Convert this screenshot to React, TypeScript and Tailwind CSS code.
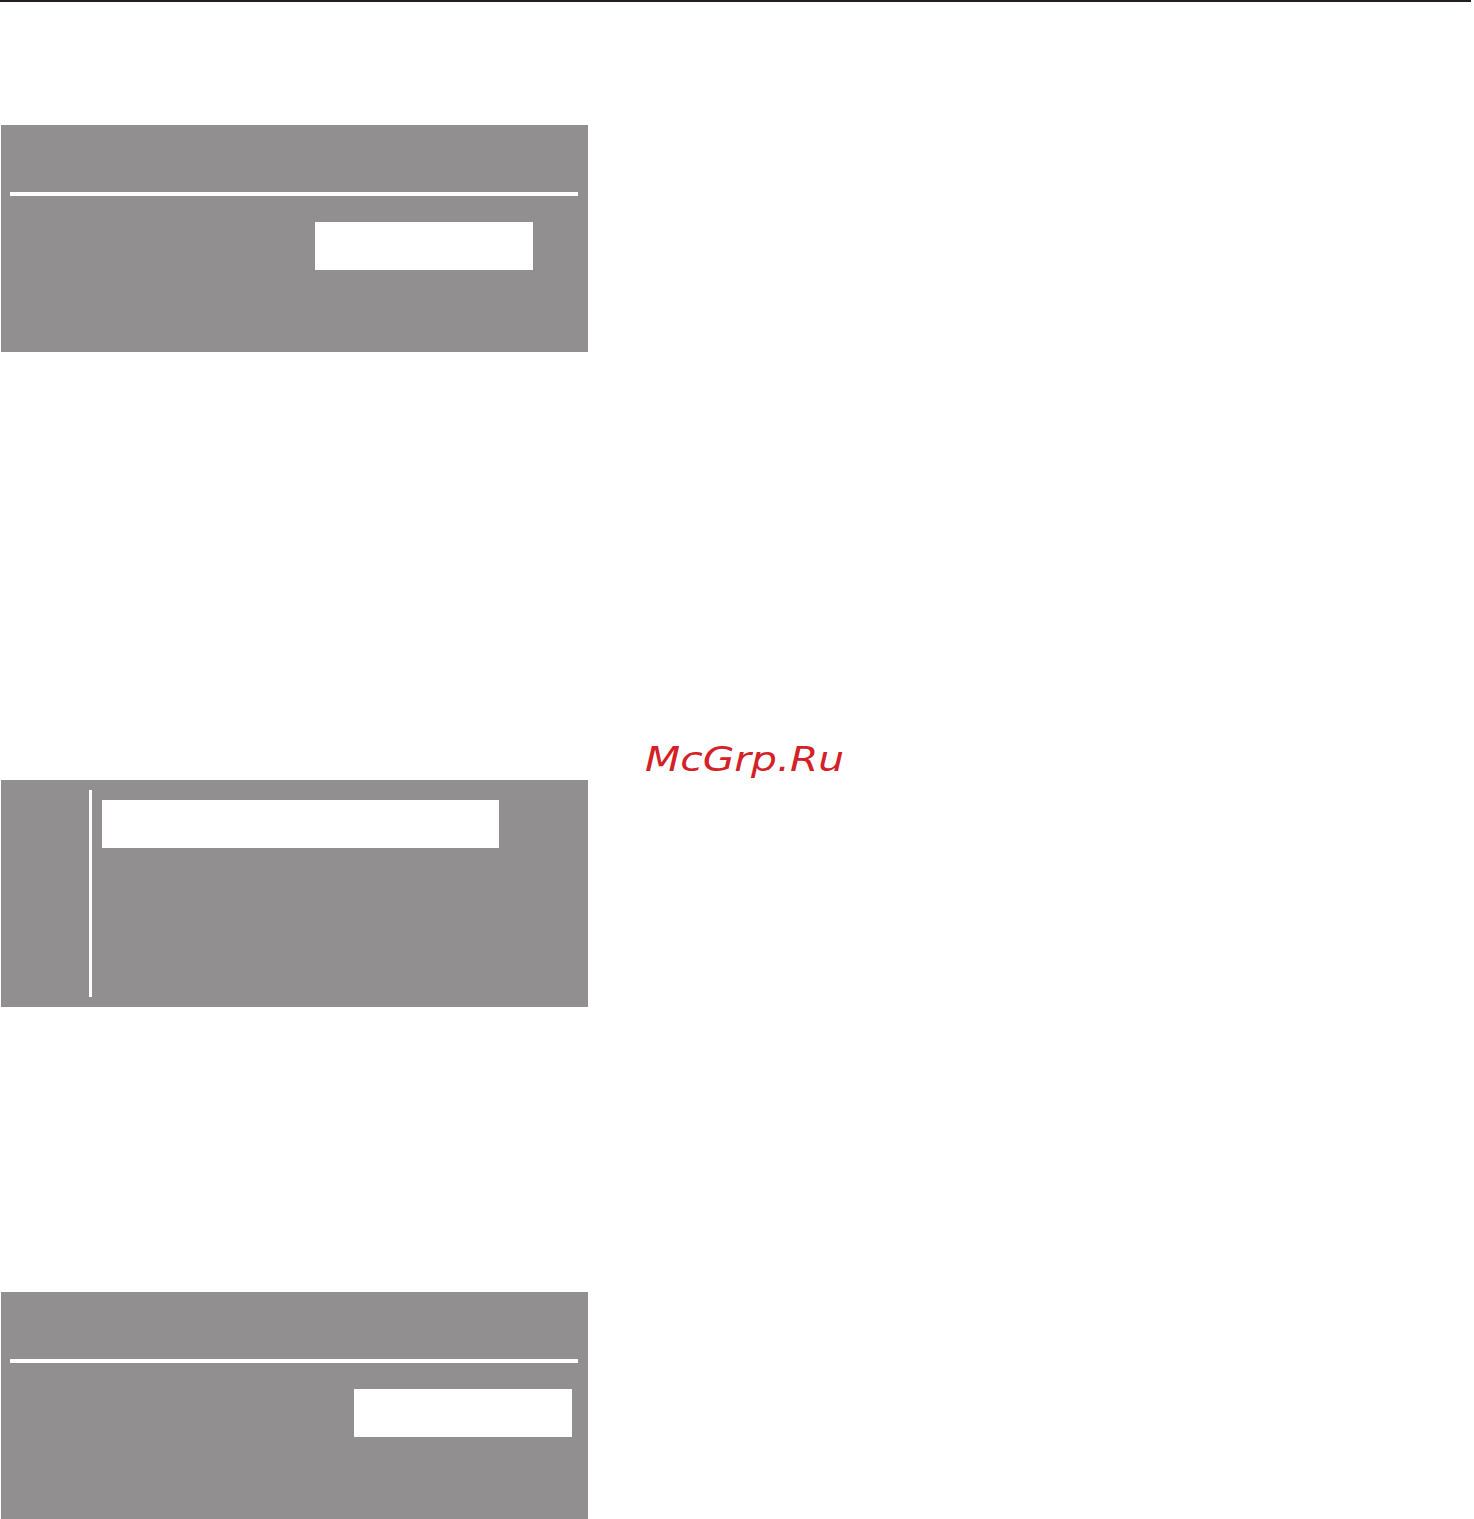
const panel = "w-[587px] bg-[#918f90] ml-px";

function RulePanel({ boxLeft, className }: { boxLeft: string; className: string }) {
  return (
    <div className={`${panel} h-[227px] flex flex-col ${className}`}>
      <div className="h-[4px] bg-white ml-[9px] mr-[10px] mt-[67px]" />
      <div className={`h-[48px] w-[218px] bg-white mt-[26px] ${boxLeft}`} />
    </div>
  );
}

export default function App() {
  return (
    <div className="relative w-[1474px] h-[1519px] bg-white overflow-hidden">
      <div className="h-[2px] w-[1471px] bg-[#231f20]" />

      <RulePanel className="mt-[123px]" boxLeft="ml-[314px]" />

      {/* menu panel with side rule */}
      <div className={`${panel} h-[227px] mt-[428px] flex pt-[10px] pb-[10px]`}>
        <div className="w-[3px] ml-[88px] bg-white" />
        <div className="h-[48px] w-[397px] bg-white ml-[10px] mt-[10px]" />
      </div>

      <RulePanel className="mt-[285px]" boxLeft="ml-[353px]" />

      <div
        className="absolute left-[645px] top-[742px] text-[#d42027] italic text-[34px] leading-none origin-left scale-x-[1.2]"
        style={{ fontFamily: '"DejaVu Sans", sans-serif' }}
      >
        McGrp.Ru
      </div>
    </div>
  );
}
